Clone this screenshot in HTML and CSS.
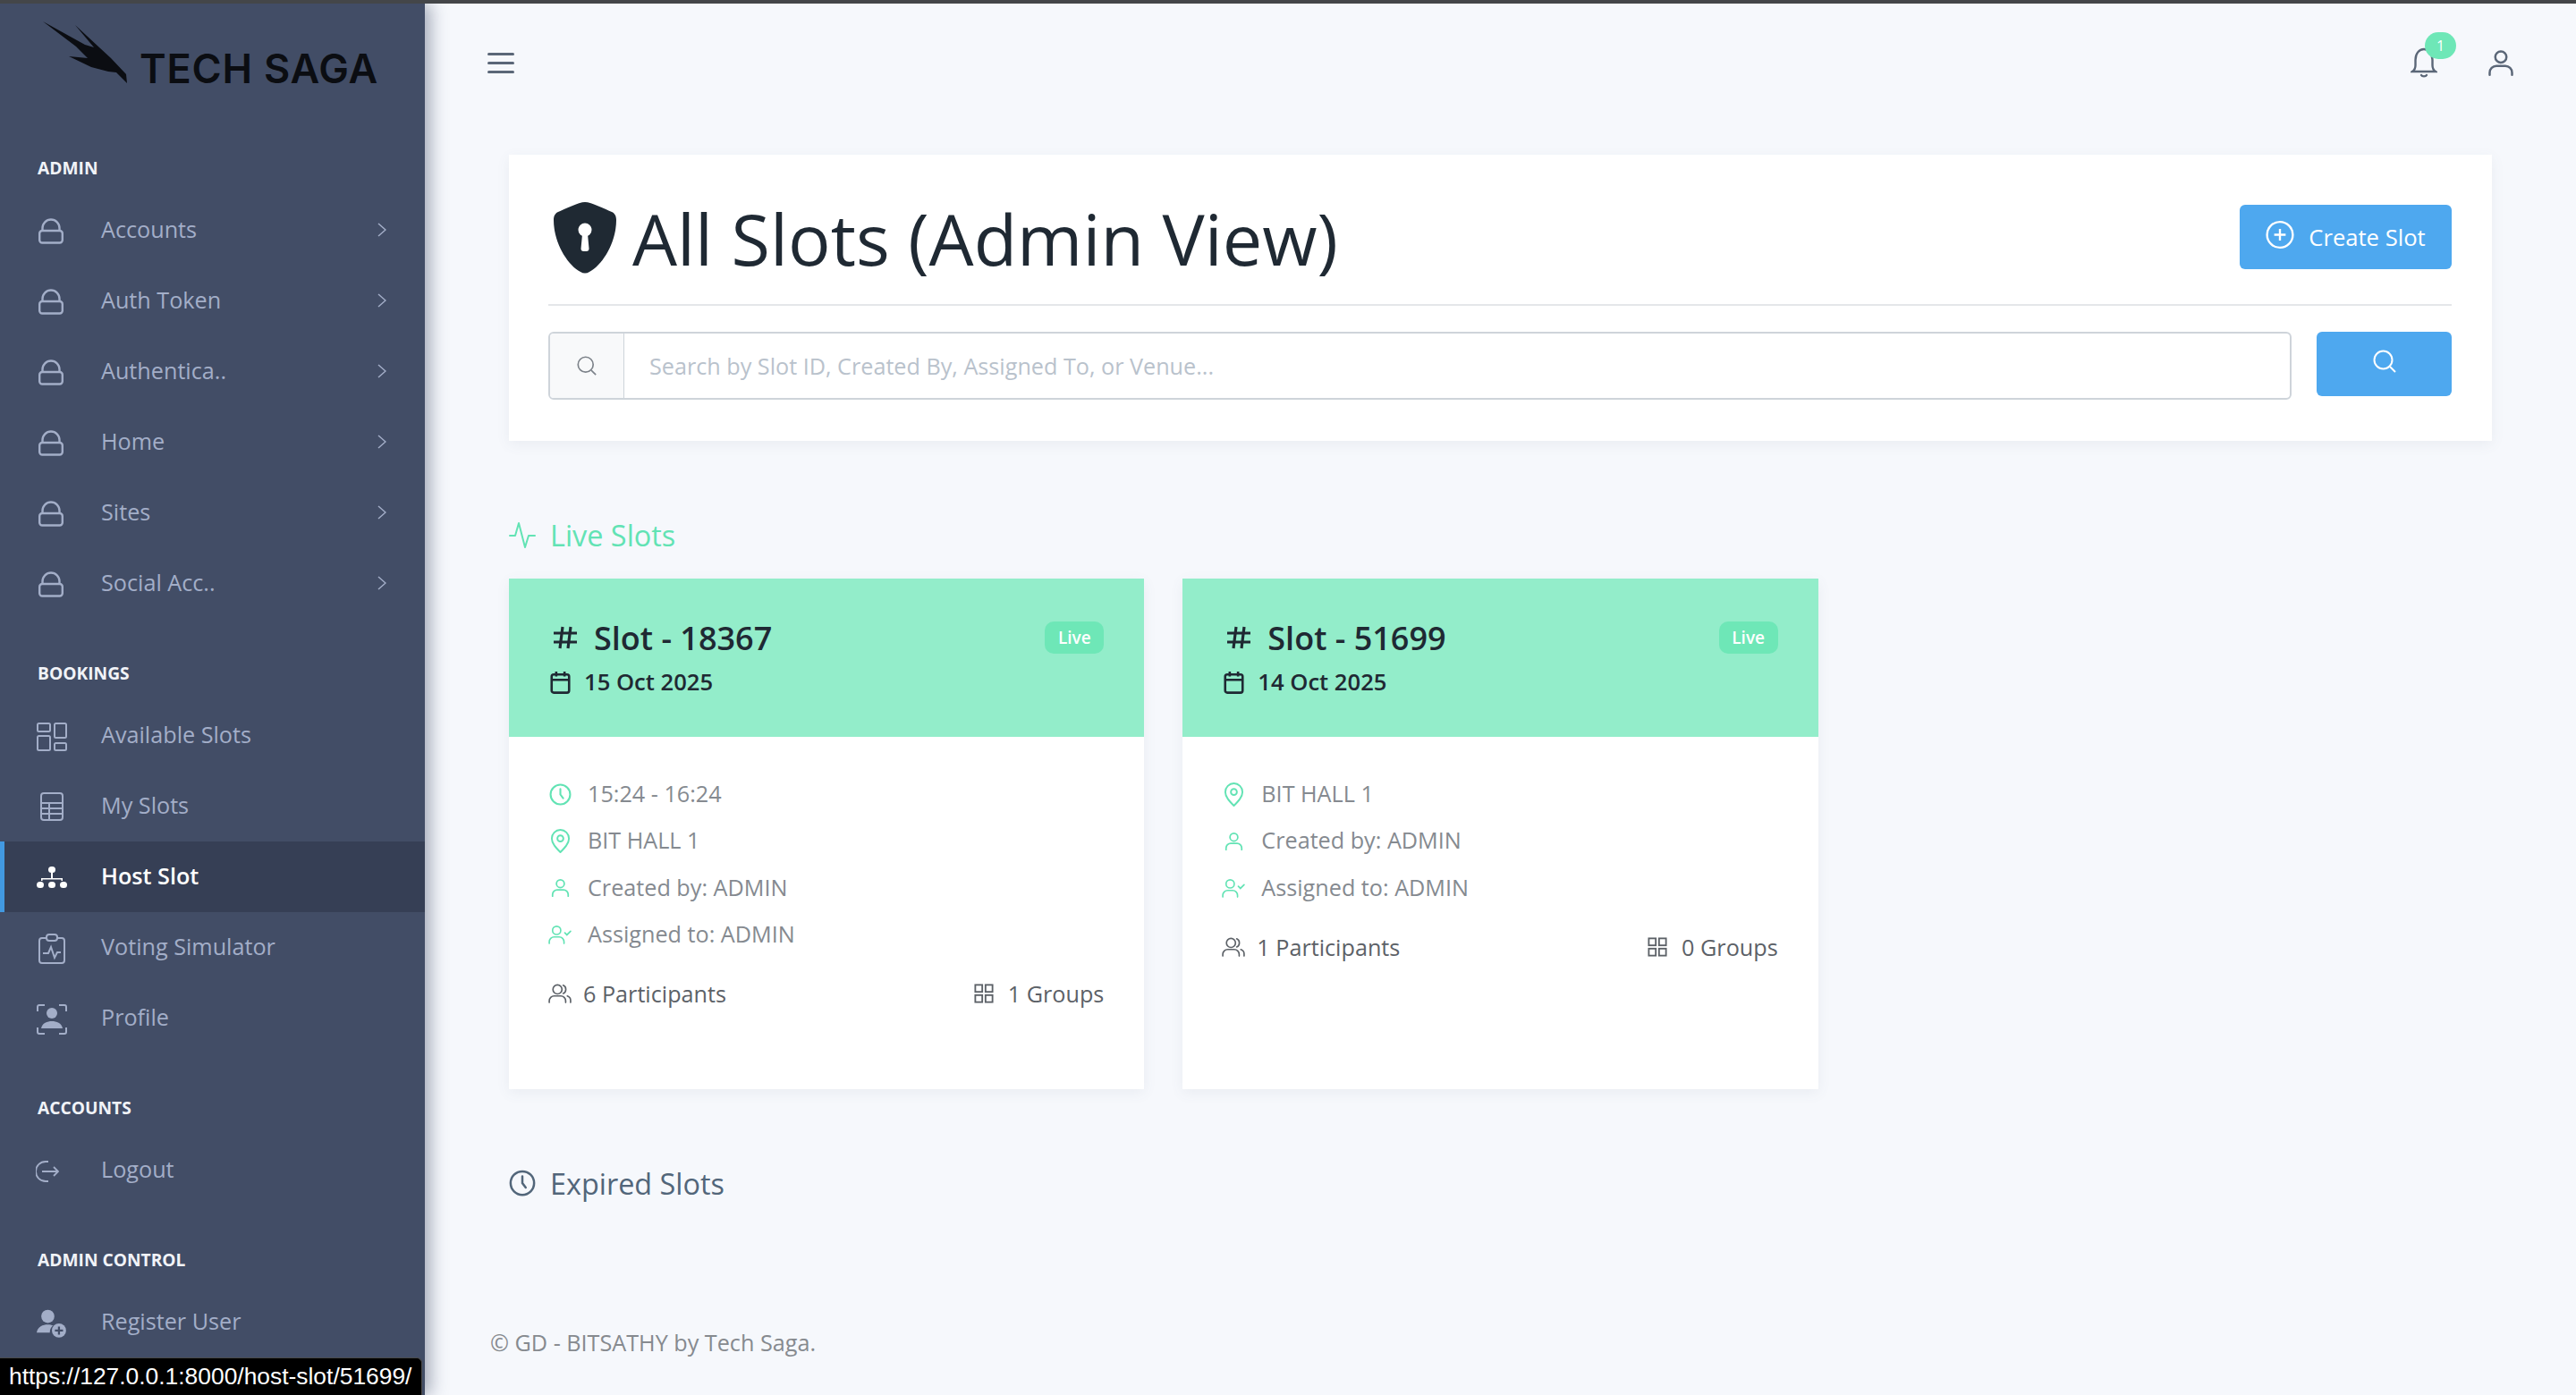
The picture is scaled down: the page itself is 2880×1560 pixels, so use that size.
FILE: index.html
```html
<!DOCTYPE html>
<html>
<head>
<meta charset="utf-8"/>
<title>All Slots (Admin View)</title>
<link rel="stylesheet" href="styles.css">
</head>
<body>
<svg class="defs" width="0" height="0">
  <symbol id="i-lock" viewBox="0 0 28 30"><path d="M4.5 15V12a9.500 9.500 0 0 1 19 0v3" fill="none" stroke="currentColor" stroke-width="2.400"/><rect x="1.200" y="15" width="25.600" height="13.500" rx="3" fill="none" stroke="currentColor" stroke-width="2.400"/></symbol>
  <symbol id="i-chev" viewBox="0 0 10 16"><path d="M1 1l8 7-8 7" fill="none" stroke="currentColor" stroke-width="1.500"/></symbol>
  <symbol id="i-layout" viewBox="0 0 34 32" fill="none" stroke="currentColor" stroke-width="2"><rect x="1" y="1" width="14" height="9" rx="1.500"/><rect x="20" y="1" width="13" height="16" rx="1.500"/><rect x="1" y="15" width="14" height="16" rx="1.500"/><rect x="20" y="23" width="13" height="8" rx="1.500"/></symbol>
  <symbol id="i-table" viewBox="0 0 26 32" fill="none" stroke="currentColor" stroke-width="2"><rect x="1" y="1" width="24" height="30" rx="3"/><path d="M1 12h24M1 18h24M1 24h24M10 12v19"/></symbol>
  <symbol id="i-sitemap" viewBox="0 0 34 26" fill="currentColor"><rect x="13" y="0" width="8" height="7" rx="3.500"/><rect x="16" y="6" width="2" height="8"/><path d="M5 16v-3h24v3h-1.500v-1.500h-21V16z"/><rect x="0" y="17" width="8" height="7" rx="3.500"/><rect x="13" y="17" width="8" height="7" rx="3.500"/><rect x="26" y="17" width="8" height="7" rx="3.500"/></symbol>
  <symbol id="i-report" viewBox="0 0 30 34" fill="none" stroke="currentColor" stroke-width="2"><path d="M9 5H4a3 3 0 0 0-3 3v22a3 3 0 0 0 3 3h22a3 3 0 0 0 3-3V8a3 3 0 0 0-3-3h-5"/><rect x="9" y="1" width="12" height="7" rx="3"/><path d="M5 22h6l3-7 4 12 3-6h4"/></symbol>
  <symbol id="i-scan" viewBox="0 0 34 34"><path d="M1 8V3a2 2 0 0 1 2-2h6M25 1h6a2 2 0 0 1 2 2v5M1 26v5a2 2 0 0 0 2 2h6M25 33h6a2 2 0 0 0 2-2v-5" fill="none" stroke="currentColor" stroke-width="2"/><circle cx="17" cy="10" r="6" fill="currentColor"/><path d="M5 27c1-6 7-8 12-8s11 2 12 8z" fill="currentColor"/></symbol>
  <symbol id="i-logout" viewBox="0 0 26 26" fill="none" stroke="currentColor" stroke-width="1.800"><path d="M14 2H11a10.500 10.500 0 0 0 0 22h3"/><path d="M7 13h18M20 8l5 5-5 5"/></symbol>
  <symbol id="i-adduser" viewBox="0 0 30 28"><circle cx="11" cy="7" r="6.500" fill="currentColor"/><path d="M0 23c1-6 6-8 11-8 2 0 4 .4 5 1-2 2-3 4-3 7z" fill="currentColor"/><circle cx="22" cy="21" r="7" fill="currentColor"/><path d="M22 17v8M18 21h8" stroke="#424d66" stroke-width="2"/></symbol>
  <symbol id="i-shield" viewBox="0 0 70 80"><path d="M35 0C42 0 58 8 65 11c3 1.500 5 4 5 9 0 25-15 50-30 58q-5 3-10 0C15 70 0 45 0 20c0-5 2-7.500 5-9C12 8 28 0 35 0z" fill="currentColor"/><circle cx="35" cy="31" r="7.500" fill="#fff"/><path d="M32 36h6l1.500 16a3 3 0 0 1-3 3h-3a3 3 0 0 1-3-3z" fill="#fff"/></symbol>
  <symbol id="i-plus-circle" viewBox="0 0 30 30" fill="none" stroke="currentColor" stroke-width="2.200"><circle cx="15" cy="15" r="13.500"/><path d="M15 9v12M9 15h12"/></symbol>
  <symbol id="i-search" viewBox="0 0 26 26" fill="none" stroke="currentColor" stroke-width="2"><circle cx="11.500" cy="11.500" r="10"/><path d="M19 19l6 6"/></symbol>
  <symbol id="i-bell" viewBox="0 0 30 34" fill="none" stroke="currentColor" stroke-width="2.400" stroke-linecap="round"><path d="M2 27h26c-3-2-3.500-4-3.500-7v-6C24.500 7 20.500 2 15 2S5.500 7 5.500 14v6c0 3-.5 5-3.500 7z"/><path d="M12 31c1 1.800 5 1.800 6 0"/></symbol>
  <symbol id="i-user" viewBox="0 0 24 24" fill="none" stroke="currentColor" stroke-width="2" stroke-linecap="round"><circle cx="12" cy="7" r="5"/><path d="M2 23v-2a6 6 0 0 1 6-6h8a6 6 0 0 1 6 6v2"/></symbol>
  <symbol id="i-usercheck" viewBox="0 0 28 24" fill="none" stroke="currentColor" stroke-width="1.800" stroke-linecap="round"><circle cx="10" cy="7" r="5"/><path d="M1 23v-2a6 6 0 0 1 6-6h6a6 6 0 0 1 6 6v2"/><path d="M20 10l2.500 2.500L27 8"/></symbol>
  <symbol id="i-users" viewBox="0 0 28 24" fill="none" stroke="currentColor" stroke-width="1.800" stroke-linecap="round"><circle cx="11" cy="7" r="5.500"/><path d="M1 23v-2a6 6 0 0 1 6-6h8a6 6 0 0 1 6 6v2M18 2a5.500 5.500 0 0 1 0 10M23 15a6 6 0 0 1 4 6v2"/></symbol>
  <symbol id="i-grid" viewBox="0 0 24 24" fill="none" stroke="currentColor" stroke-width="2"><rect x="1.500" y="1.500" width="8.500" height="8.500"/><rect x="14" y="1.500" width="8.500" height="8.500"/><rect x="1.500" y="14" width="8.500" height="8.500"/><rect x="14" y="14" width="8.500" height="8.500"/></symbol>
  <symbol id="i-clock" viewBox="0 0 24 24" fill="none" stroke="currentColor" stroke-width="2" stroke-linecap="round"><circle cx="12" cy="12" r="10.500"/><path d="M12 6v6l3 4"/></symbol>
  <symbol id="i-pin" viewBox="0 0 24 28" fill="none" stroke="currentColor" stroke-width="2"><path d="M12 27C7 22 2 17 2 11a10 10 0 0 1 20 0c0 6-5 11-10 16z"/><circle cx="12" cy="11" r="3.500"/></symbol>
  <symbol id="i-calendar" viewBox="0 0 24 28" fill="none" stroke="currentColor" stroke-width="2.800"><rect x="1.500" y="4.500" width="21" height="22" rx="2.500"/><path d="M1.500 11h21M7 1v6M17 1v6"/></symbol>
  <symbol id="i-hash" viewBox="0 0 28 26" fill="none" stroke="currentColor" stroke-width="3.200"><path d="M1 8h26M1 18h26M11 1L8 25M20 1l-3 24"/></symbol>
  <symbol id="i-activity" viewBox="0 0 30 30" fill="none" stroke="currentColor" stroke-width="2" stroke-linecap="round" stroke-linejoin="round"><path d="M1 16h6l4-14 7 27 4-13h7"/></symbol>
</svg>

<div class="app">
  <aside class="sidebar">
    <div class="logo">
      <svg class="bird" width="98" height="80" viewBox="0 0 98 80"><path d="M2 2l47 26 10 3-21-25 27 25 13 12 17 18 1 10-12-12-9-1-19-5-25-12 21 2-13-13z" fill="#0b0d12"/></svg>
      <span class="logo-text">TECH SAGA</span>
    </div>

    <div class="nav-label">ADMIN</div>
    <a class="nav-item"><svg class="nav-icon lock"><use href="#i-lock"/></svg><span>Accounts</span><svg class="chev"><use href="#i-chev"/></svg></a>
    <a class="nav-item"><svg class="nav-icon lock"><use href="#i-lock"/></svg><span>Auth Token</span><svg class="chev"><use href="#i-chev"/></svg></a>
    <a class="nav-item"><svg class="nav-icon lock"><use href="#i-lock"/></svg><span>Authentica..</span><svg class="chev"><use href="#i-chev"/></svg></a>
    <a class="nav-item"><svg class="nav-icon lock"><use href="#i-lock"/></svg><span>Home</span><svg class="chev"><use href="#i-chev"/></svg></a>
    <a class="nav-item"><svg class="nav-icon lock"><use href="#i-lock"/></svg><span>Sites</span><svg class="chev"><use href="#i-chev"/></svg></a>
    <a class="nav-item"><svg class="nav-icon lock"><use href="#i-lock"/></svg><span>Social Acc..</span><svg class="chev"><use href="#i-chev"/></svg></a>

    <div class="nav-label later">BOOKINGS</div>
    <a class="nav-item"><svg class="nav-icon"><use href="#i-layout"/></svg><span>Available Slots</span></a>
    <a class="nav-item"><svg class="nav-icon table"><use href="#i-table"/></svg><span>My Slots</span></a>
    <a class="nav-item active"><svg class="nav-icon sitemap"><use href="#i-sitemap"/></svg><span>Host Slot</span></a>
    <a class="nav-item"><svg class="nav-icon"><use href="#i-report"/></svg><span>Voting Simulator</span></a>
    <a class="nav-item"><svg class="nav-icon"><use href="#i-scan"/></svg><span>Profile</span></a>

    <div class="nav-label later">ACCOUNTS</div>
    <a class="nav-item"><svg class="nav-icon logout"><use href="#i-logout"/></svg><span>Logout</span></a>

    <div class="nav-label later">ADMIN CONTROL</div>
    <a class="nav-item"><svg class="nav-icon"><use href="#i-adduser"/></svg><span>Register User</span></a>
  </aside>

  <main class="main">
    <header class="topbar">
      <div class="burger"><i></i><i></i><i></i></div>
      <div class="top-right">
        <div class="bell-wrap">
          <svg class="bell"><use href="#i-bell"/></svg>
          <span class="bell-badge">1</span>
        </div>
        <svg class="top-user"><use href="#i-user"/></svg>
      </div>
    </header>

    <div class="content">
      <section class="hero">
        <div class="hero-head">
          <h1 class="hero-title"><svg class="shield"><use href="#i-shield"/></svg>All Slots (Admin View)</h1>
          <button class="btn btn-create"><svg class="plus"><use href="#i-plus-circle"/></svg>Create Slot</button>
        </div>
        <div class="search-row">
          <div class="input-group">
            <span class="addon"><svg class="addon-icon"><use href="#i-search"/></svg></span>
            <span class="fake-input">Search by Slot ID, Created By, Assigned To, or Venue...</span>
          </div>
          <button class="btn btn-search"><svg class="search-icon"><use href="#i-search"/></svg></button>
        </div>
      </section>

      <h2 class="sec-title live"><svg class="sec-icon"><use href="#i-activity"/></svg>Live Slots</h2>

      <div class="slots">
        <article class="slot">
          <div class="slot-head">
            <div>
              <div class="slot-title"><svg class="hash"><use href="#i-hash"/></svg>Slot - 18367</div>
              <div class="slot-date"><svg class="cal"><use href="#i-calendar"/></svg>15 Oct 2025</div>
            </div>
            <span class="live-badge">Live</span>
          </div>
          <div class="slot-body">
            <div class="row"><span class="row-ic"><svg class="r-clock"><use href="#i-clock"/></svg></span>15:24 - 16:24</div>
            <div class="row"><span class="row-ic"><svg class="r-pin"><use href="#i-pin"/></svg></span>BIT HALL 1</div>
            <div class="row"><span class="row-ic"><svg class="r-user"><use href="#i-user"/></svg></span>Created by: ADMIN</div>
            <div class="row"><span class="row-ic"><svg class="r-check"><use href="#i-usercheck"/></svg></span>Assigned to: ADMIN</div>
            <div class="stats">
              <span class="stat"><svg class="s-users"><use href="#i-users"/></svg>6 Participants</span>
              <span class="stat"><svg class="s-grid"><use href="#i-grid"/></svg>1 Groups</span>
            </div>
          </div>
        </article>

        <article class="slot">
          <div class="slot-head">
            <div>
              <div class="slot-title"><svg class="hash"><use href="#i-hash"/></svg>Slot - 51699</div>
              <div class="slot-date"><svg class="cal"><use href="#i-calendar"/></svg>14 Oct 2025</div>
            </div>
            <span class="live-badge">Live</span>
          </div>
          <div class="slot-body">
            <div class="row"><span class="row-ic"><svg class="r-pin"><use href="#i-pin"/></svg></span>BIT HALL 1</div>
            <div class="row"><span class="row-ic"><svg class="r-user"><use href="#i-user"/></svg></span>Created by: ADMIN</div>
            <div class="row"><span class="row-ic"><svg class="r-check"><use href="#i-usercheck"/></svg></span>Assigned to: ADMIN</div>
            <div class="stats">
              <span class="stat"><svg class="s-users"><use href="#i-users"/></svg>1 Participants</span>
              <span class="stat"><svg class="s-grid"><use href="#i-grid"/></svg>0 Groups</span>
            </div>
          </div>
        </article>
      </div>

      <h2 class="sec-title expired"><svg class="sec-icon"><use href="#i-clock"/></svg>Expired Slots</h2>
    </div>

    <footer class="footer">© GD - BITSATHY by Tech Saga.</footer>
  </main>
</div>

<div class="status-link">https://127.0.0.1:8000/host-slot/51699/</div>
</body>
</html>
```

FILE: styles.css
```css
* {
  box-sizing: border-box;
}

html, body {
  height: 100%;
}

body {
  margin: 0;
  border-top: 4px solid #444649;
  background: #f6f8fc;
  font-family: "Open Sans", sans-serif;
  overflow: hidden;
}

.defs {
  position: absolute;
}

.app {
  display: flex;
  height: 1556px;
}

/* sidebar */
.sidebar {
  flex: 0 0 475px;
  background: #424d66;
  box-shadow: 6px 0 18px rgba(60, 70, 100, .45);
  color: #a3aec8;
  position: relative;
  z-index: 2;
  overflow: hidden;
}

.logo {
  height: 154px;
  padding: 18px 0 0 46px;
  display: flex;
  align-items: flex-start;
}

.bird {
  flex: none;
}

.logo-text {
  margin: 28px 0 0 12px;
  font-family: Inter, sans-serif;
  font-weight: 600;
  font-size: 45px;
  line-height: 54px;
  letter-spacing: .8px;
  color: #0b0d12;
  white-space: nowrap;
}

.nav-label {
  height: 60px;
  padding-left: 42px;
  font-weight: 700;
  font-size: 19.2px;
  line-height: 60px;
  color: #f1f3f8;
}

.nav-label.later {
  margin-top: 31px;
}

.nav-item {
  height: 79px;
  display: flex;
  align-items: center;
  position: relative;
  padding: 0 0 3px 113px;
  font-size: 25.2px;
}

.nav-item.active {
  background: #363f55;
  border-left: 5px solid #4299e1;
  padding-left: 108px;
  color: #fff;
  font-weight: 600;
}

.nav-icon {
  position: absolute;
  left: 41px;
  top: 24px;
  width: 34px;
  height: 34px;
}

.nav-item.active .nav-icon {
  left: 36px;
}

.nav-icon.lock {
  left: 43px;
  top: 25px;
  width: 28px;
  height: 30px;
}

.nav-icon.table {
  left: 45px;
  width: 26px;
  height: 32px;
}

.nav-icon.sitemap {
  height: 26px;
  top: 28px;
}

.nav-icon.logout {
  left: 40px;
  width: 26px;
  height: 26px;
  top: 28px;
}

.chev {
  position: absolute;
  left: 422px;
  top: 31px;
  width: 10px;
  height: 16px;
}

/* main column */
.main {
  flex: 1;
  min-width: 0;
  display: flex;
  flex-direction: column;
}

.topbar {
  height: 132px;
  display: flex;
  align-items: center;
  justify-content: space-between;
  padding: 0 69px 0 70px;
  color: #5b6778;
}

.burger {
  width: 30px;
  display: flex;
  flex-direction: column;
  gap: 7px;
}

.burger i {
  display: block;
  height: 3px;
  background: #5b6778;
  border-radius: 2px;
}

.top-right {
  display: flex;
  align-items: center;
  gap: 56px;
}

.bell-wrap {
  position: relative;
  width: 30px;
  height: 34px;
}

.bell {
  width: 30px;
  height: 34px;
  display: block;
}

.bell-badge {
  position: absolute;
  left: 16px;
  top: -17px;
  width: 35px;
  height: 30px;
  border-radius: 15px;
  background: #6ee7b7;
  color: #fff;
  font-size: 16px;
  line-height: 30px;
  text-align: center;
}

.top-user {
  width: 30px;
  height: 32px;
}

.content {
  padding: 37px 94px 0;
}

/* top card */
.hero {
  height: 320px;
  background: #fff;
  box-shadow: 0 4px 14px rgba(90, 100, 130, .08);
  padding: 0 45px 0 44px;
}

.hero-head {
  height: 169px;
  padding-top: 18px;
  border-bottom: 2px solid #e4e6e9;
  display: flex;
  align-items: center;
  justify-content: space-between;
}

.hero-title {
  margin: 0;
  display: flex;
  align-items: center;
  font-weight: 400;
  font-size: 79.2px;
  line-height: 110px;
  color: #1f2933;
}

.shield {
  width: 70px;
  height: 80px;
  margin: 0 18px 0 6px;
}

.btn {
  border: 0;
  border-radius: 6px;
  background: #4ea8ef;
  color: #fff;
  font-family: inherit;
  padding: 0;
  display: flex;
  align-items: center;
  justify-content: center;
}

.btn-create {
  width: 237px;
  height: 72px;
  font-size: 25.6px;
  font-weight: 500;
  margin-top: -1px;
}

.plus {
  width: 32px;
  height: 33px;
  margin: -6px 16px 0 0;
}

.search-row {
  display: flex;
  gap: 28px;
  margin-top: 29px;
}

.input-group {
  flex: 1;
  height: 76px;
  display: flex;
  border: 2px solid #ced4da;
  border-radius: 6px;
  overflow: hidden;
}

.addon {
  width: 83px;
  flex: none;
  display: flex;
  align-items: center;
  justify-content: center;
  background: #f8f9fa;
  border-right: 1px solid #ced4da;
  color: #7d838a;
}

.addon-icon {
  width: 22px;
  height: 22px;
}

.fake-input {
  padding-left: 28px;
  font-size: 25.2px;
  line-height: 72px;
  color: #b9c2cc;
}

.btn-search {
  width: 151px;
  height: 72px;
}

.search-icon {
  width: 26px;
  height: 28px;
  margin-top: -6px;
}

/* section headings */
.sec-title {
  margin: 0;
  display: flex;
  align-items: center;
  font-weight: 400;
  font-size: 32.4px;
  line-height: 50px;
}

.sec-icon {
  width: 30px;
  height: 30px;
  margin-right: 16px;
}

.sec-title.live {
  margin-top: 80px;
  color: #62e3b4;
}

.sec-title.expired {
  margin-top: 80px;
  color: #52667a;
}

/* slot cards */
.slots {
  display: grid;
  grid-template-columns: repeat(3, 1fr);
  gap: 43px;
  margin-top: 24px;
}

.slot {
  background: #fff;
  box-shadow: 0 4px 14px rgba(90, 100, 130, .08);
}

.slot-head {
  height: 177px;
  background: #93edca;
  padding: 40px 45px 0 44px;
  display: flex;
  justify-content: space-between;
  align-items: flex-start;
  color: #1f2933;
}

.slot-title {
  height: 52px;
  display: flex;
  align-items: center;
  font-weight: 600;
  font-size: 36px;
}

.hash {
  width: 28px;
  height: 26px;
  margin: 0 18px 0 5px;
}

.slot-date {
  margin-top: 4px;
  display: flex;
  align-items: center;
  font-weight: 600;
  font-size: 25.6px;
  line-height: 40px;
}

.cal {
  width: 23px;
  height: 26px;
  margin: 0 15px 0 2px;
}

.live-badge {
  margin-top: 8px;
  width: 66px;
  height: 36px;
  border-radius: 10px;
  background: #6ee7b7;
  color: #fff;
  font-size: 19px;
  font-weight: 600;
  line-height: 36px;
  text-align: center;
}

.slot-body {
  padding: 38px 45px 81px 44px;
}

.row {
  height: 52.3px;
  padding-bottom: 2px;
  display: flex;
  align-items: center;
  font-size: 25.2px;
  color: #858a90;
}

.row-ic {
  width: 44px;
  flex: none;
  display: flex;
  align-items: center;
  margin-top: 2px;
  color: #62e3b4;
}

.r-clock {
  width: 25px;
  height: 25px;
  margin-left: 1px;
}

.r-pin {
  width: 23px;
  height: 27px;
  margin-left: 2px;
}

.r-user {
  width: 21px;
  height: 23px;
  margin-left: 3px;
}

.r-check {
  width: 26px;
  height: 22px;
}

.stats {
  height: 52px;
  margin-top: 14px;
  display: flex;
  align-items: center;
  justify-content: space-between;
  font-size: 25.2px;
  color: #5c6167;
}

.stat {
  display: flex;
  align-items: center;
}

.s-users {
  width: 26px;
  height: 22px;
  margin-right: 13px;
}

.s-grid {
  width: 22px;
  height: 22px;
  margin-right: 16px;
}

.footer {
  margin-top: auto;
  padding: 0 0 41px 73px;
  font-size: 25.2px;
  line-height: 36px;
  color: #868a8f;
}

/* browser's link preview */
.status-link {
  position: absolute;
  left: 0;
  bottom: 0;
  z-index: 5;
  width: 472px;
  height: 42px;
  padding-left: 10px;
  background: #000;
  border: 1px solid #4a4a4a;
  border-left: 0;
  border-bottom: 0;
  border-top-right-radius: 6px;
  color: #fff;
  font-family: "Liberation Sans", sans-serif;
  font-size: 26.4px;
  line-height: 41px;
  white-space: nowrap;
}
```
